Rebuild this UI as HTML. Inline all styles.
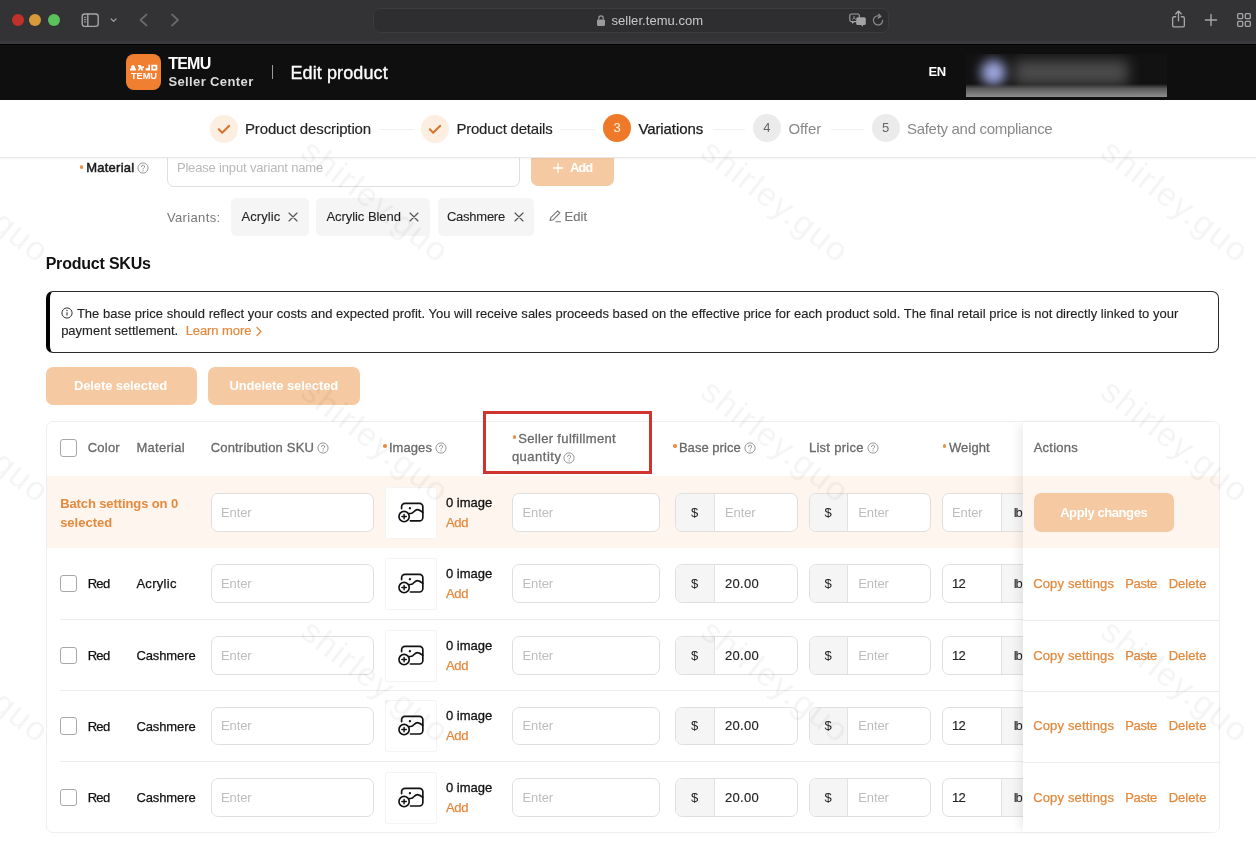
<!DOCTYPE html>
<html lang="en"><head><meta charset="utf-8"><title>Edit product - TEMU Seller Center</title>
<style>
*{box-sizing:border-box}
html,body{margin:0;padding:0}
body{will-change:transform;width:1256px;height:844px;overflow:hidden;background:#fff;position:relative;font-family:"Liberation Sans",sans-serif;font-size:13px}
.abs{position:absolute;display:block;z-index:5}
.abs svg,.hp{display:block}
.t{position:absolute;white-space:pre;line-height:20px;height:20px;z-index:5}
.chrome{position:absolute;left:0;top:0;width:1256px;height:44px;background:linear-gradient(#333335 0,#333335 40.500px,#3a3a3c 41.500px,#3a3a3c 100%)}
.tl{position:absolute;top:14.3px;width:12px;height:12px;border-radius:50%}
.url{position:absolute;left:373px;top:8px;width:516px;height:25px;border-radius:7px;background:#2e2e30;border:1px solid #3b3b3d}
.hdr{position:absolute;left:0;top:44px;width:1256px;height:56px;background:#0f0f0f;border-top:1px solid #020202}
.hdr .t,.hdr .abs{margin-top:-45px}
.logo{position:absolute;left:126px;top:8.800px;width:35.200px;height:36px;border-radius:8px;background:#f07f31;overflow:hidden}
.blur{position:absolute;left:966px;top:8.500px;width:200.500px;height:43px;overflow:hidden;background:#121212}
.blur .b1{position:absolute;left:15px;top:6px;width:25px;height:25px;border-radius:50%;background:#a0a9e2;filter:blur(6px)}
.blur .b2{position:absolute;left:48px;top:6px;width:114px;height:25px;background:#4c4c4c;filter:blur(7px)}
.blur .b3{position:absolute;left:0;bottom:0;width:100%;height:13px;background:linear-gradient(rgba(60,60,60,0),#5a5a5a 35%,#8e8e8e)}
.steps{position:absolute;left:0;top:100px;width:1256px;height:57.500px;background:#fff;border-bottom:1px solid #e6e6e6;box-shadow:0 1px 2px rgba(0,0,0,.04);z-index:20}
.steps .t,.steps .abs,.steps .ln,.steps .circ{margin-top:-100px}
.ln{position:absolute;top:128.500px;height:1px;background:#f0f0f0}
.circ{position:absolute;top:114.300px;width:28px;height:28px;border-radius:50%;text-align:center;line-height:28px;font-size:13px}
.wm{position:absolute;font-size:34px;line-height:44px;height:44px;color:rgba(0,0,0,.043);transform-origin:0 50%;transform:rotate(38deg);white-space:pre;z-index:40;letter-spacing:1.4px;pointer-events:none}
.st{position:absolute;width:3.500px;height:3.500px;border-radius:50%;background:#e8904a;z-index:5}
.inp{position:absolute;border:1px solid #dfdfdf;border-radius:7px;background:#fff;overflow:hidden;z-index:2}
.inp .pre{position:absolute;left:0;top:0;height:100%;background:#f5f5f5;border-right:1px solid #e2e2e2}
.inp .suf{position:absolute;top:0;right:0;height:100%;background:#f5f5f5;border-left:1px solid #e2e2e2}
.btn{position:absolute;border-radius:7px;background:#f5c9a1;z-index:5}
.chip{position:absolute;border-radius:5px;background:#f5f5f5;z-index:1}
.info{position:absolute;left:45.500px;top:291px;width:1173.500px;height:61.500px;border:1px solid #2a2a2a;border-left:4.500px solid #000;border-radius:7px;z-index:1}
.tbl{position:absolute;left:45.500px;top:420.500px;width:1174.500px;height:412px;border:1px solid #eeeeee;border-radius:7px;z-index:1}
.batch{position:absolute;left:46.500px;top:476.300px;width:1172.500px;height:71.700px;background:#fef5ee;z-index:1}
.cb{position:absolute;width:17.500px;height:17.500px;border:1px solid #a8a8a8;border-radius:3px;background:#fff;z-index:3}
.red{position:absolute;left:483.300px;top:411.300px;width:168.700px;height:62.500px;border:3px solid #cf352e;z-index:6}
.imgb{position:absolute;width:52px;height:52px;background:#fff;border-radius:3px;z-index:2;box-shadow:inset 0 0 0 1px #f4f4f4}
.imgb svg{position:absolute;left:13.500px;top:15px;display:block}
.sep{position:absolute;left:59.500px;width:963px;height:1px;background:#ececec;z-index:1}
.act{position:absolute;left:1022.500px;top:421.500px;width:196.500px;height:410px;background:#fff;z-index:4;box-shadow:-7px 0 10px -3px rgba(0,0,0,.075);border-radius:0 6px 6px 0;overflow:visible}
.actb{position:absolute;left:0;top:54.800px;width:100%;height:71.700px;background:#fef5ee}
.sep2{position:absolute;left:0;width:100%;height:1px;background:#ececec}

</style></head>
<body>
<div class="chrome">
<i class="tl" style="left:12.2px;background:#c0312a"></i><i class="tl" style="left:29.4px;background:#d69a3a"></i><i class="tl" style="left:47.6px;background:#5bc15c"></i>
<svg class="abs" style="left:80px;top:11px" width="40" height="18" viewBox="0 0 40 18" fill="none" stroke="#a6a6a8" stroke-width="1.4" stroke-linecap="round" stroke-linejoin="round"><rect x="2.2" y="3" width="16" height="12.4" rx="2.6"/><path d="M7.8 3v12.4"/><path d="M4.3 6.3h1.6M4.3 8.6h1.6M4.3 10.9h1.6" stroke-width="1"/><path d="M31.2 8l2.4 2.4L36 8" stroke="#9a9a9c" stroke-width="1.3"/></svg>
<svg class="abs" style="left:136px;top:12px" width="48" height="16" viewBox="0 0 48 16" fill="none" stroke="#6a6a6c" stroke-width="1.7" stroke-linecap="round" stroke-linejoin="round"><path d="M10.5 2.5L4.5 8l6 5.5"/><path d="M36 2.5l6 5.5-6 5.5"/></svg>
<div class="url"></div>
<svg class="abs" style="left:596px;top:14px" width="10" height="13" viewBox="0 0 10 13"><rect x="1" y="5.4" width="8" height="6.6" rx="1.2" fill="#9a9a9c"/><path d="M2.8 5.6V4a2.2 2.2 0 014.4 0v1.6" fill="none" stroke="#9a9a9c" stroke-width="1.2"/></svg>
<span class="t" style="left:611.40px;top:11.20px;font-size:13px;color:#c9c9cb;letter-spacing:0.054px;">seller.temu.com</span>
<svg class="abs" style="left:849px;top:13px" width="18" height="14" viewBox="0 0 18 14"><rect x="0.8" y="1" width="9.5" height="7.6" rx="1.6" fill="none" stroke="#a2a2a4" stroke-width="1.1"/><path d="M3 9v2l2.2-2z" fill="#a2a2a4"/><rect x="7.2" y="4.2" width="9.6" height="7.8" rx="1.6" fill="#a2a2a4"/><path d="M14 12v1.8L12 12z" fill="#a2a2a4"/><text x="3.2" y="7" font-size="5.5" font-family="Liberation Sans,sans-serif" fill="#a2a2a4">A</text></svg>
<svg class="abs" style="left:871px;top:13px" width="14" height="14" viewBox="0 0 14 14" fill="none" stroke="#8e8e90" stroke-width="1.2" stroke-linecap="round" stroke-linejoin="round"><path d="M11.6 7.4a4.6 4.6 0 11-2-3.8"/><path d="M7.6 1.2l2.2 2.3-2.6 1.6"/></svg>
<svg class="abs" style="left:1170.200px;top:8.800px" width="17" height="20.800" viewBox="0 0 18 22" fill="none" stroke="#a6a6a8" stroke-width="1.4" stroke-linecap="round" stroke-linejoin="round"><path d="M6 8.2H4.4a1.6 1.6 0 00-1.6 1.6v7.6A1.6 1.6 0 004.4 19h9.2a1.6 1.6 0 001.6-1.6V9.800a1.6 1.6 0 00-1.6-1.6H12"/><path d="M9 12.500V2.6M6 5.2l3-3 3 3"/></svg>
<svg class="abs" style="left:1202.600px;top:12px" width="16" height="16" viewBox="0 0 16 16" fill="none" stroke="#a6a6a8" stroke-width="1.4" stroke-linecap="round"><path d="M8 2.400v11.200M2.400 8h11.200"/></svg>
<svg class="abs" style="left:1235.800px;top:11.800px" width="16" height="16" viewBox="0 0 16 16" fill="none" stroke="#a6a6a8" stroke-width="1.3"><rect x="1.700" y="1.700" width="5" height="5" rx="1"/><rect x="9.3" y="1.700" width="5" height="5" rx="1"/><rect x="1.700" y="9.3" width="5" height="5" rx="1"/><rect x="9.3" y="9.3" width="5" height="5" rx="1"/></svg>
</div>
<div class="hdr">
<div class="logo"><svg width="35" height="36" viewBox="0 0 35 36"><g fill="#fff" transform="translate(-1.820,-1.550) scale(1.119,1.188)"><path d="M6.200 11.800l1.700-1.500 1.700 1.500v1.300l1 .9v1.200H5.200V14l1-.9z"/><path d="M12 10.600h2.600l1.200 1.500 1.900-.6v1.600l-1.500.5.900 1.600h-1.700l-.8-1.400-1.100 1.400H12l1.400-2.200z"/><path d="M19.200 13.200h2.400V10.400h1.500v4.800h-3.900z"/><path d="M24.200 10.400h5.400v4.800h-5.400zm1.600 1.500v1.800h2.200v-1.800z"/></g><text x="18" y="25.100" text-anchor="middle" font-family="Liberation Sans,sans-serif" font-weight="700" font-size="8.500" fill="#fff" textLength="26" lengthAdjust="spacingAndGlyphs">TEMU</text></svg></div>
<span class="t" style="left:168.15px;top:53.50px;font-size:16px;color:#fff;font-weight:700;letter-spacing:-0.759px;">TEMU</span>
<span class="t" style="left:168.40px;top:71.50px;font-size:13px;color:#dcdcdc;font-weight:700;letter-spacing:0.383px;">Seller Center</span>
<div class="abs" style="left:271.5px;top:65px;width:1.5px;height:14px;background:#9a9a9a"></div>
<span class="t" style="left:290.40px;top:62.50px;font-size:18px;color:#fff;letter-spacing:0.112px;-webkit-text-stroke:0.35px #fff;">Edit product</span>
<span class="t" style="left:928.40px;top:61.50px;font-size:13px;color:#fff;font-weight:700;letter-spacing:-0.262px;">EN</span>
<div class="blur"><b class="b1"></b><b class="b2"></b><b class="b3"></b></div>
</div>
<div class="steps">
<div class="abs" style="left:209.7px;top:115px"><svg width="28" height="28" viewBox="0 0 28 28"><circle cx="14" cy="14" r="14" fill="#fdeee2"/><path d="M8.800 14.200l3.400 3.500 7-7" fill="none" stroke="#d8742f" stroke-width="2" stroke-linecap="round" stroke-linejoin="round"/></svg></div>
<span class="t" style="left:244.90px;top:119.20px;font-size:15px;color:#222;letter-spacing:-0.117px;-webkit-text-stroke:0.15px #222;">Product description</span>
<i class="ln" style="left:379px;width:35px"></i>
<div class="abs" style="left:420.500px;top:115px"><svg width="28" height="28" viewBox="0 0 28 28"><circle cx="14" cy="14" r="14" fill="#fdeee2"/><path d="M8.800 14.200l3.400 3.500 7-7" fill="none" stroke="#d8742f" stroke-width="2" stroke-linecap="round" stroke-linejoin="round"/></svg></div>
<span class="t" style="left:456.40px;top:119.20px;font-size:15px;color:#222;letter-spacing:-0.210px;-webkit-text-stroke:0.15px #222;">Product details</span>
<i class="ln" style="left:560px;width:35px"></i>
<div class="circ" style="left:603.2px;background:#ee7a29;color:#fff3e4">3</div>
<span class="t" style="left:638.40px;top:118.50px;font-size:15px;color:#1a1a1a;letter-spacing:-0.088px;-webkit-text-stroke:0.25px #1a1a1a;">Variations</span>
<i class="ln" style="left:712.500px;width:32px"></i>
<div class="circ" style="left:752.900px;background:#ebebeb;color:#666">4</div>
<span class="t" style="left:788.40px;top:118.50px;font-size:15px;color:#8a8a8a;letter-spacing:-0.070px;">Offer</span>
<i class="ln" style="left:830.500px;width:33px"></i>
<div class="circ" style="left:871.700px;background:#ebebeb;color:#666">5</div>
<span class="t" style="left:907.00px;top:118.50px;font-size:15px;color:#8a8a8a;letter-spacing:-0.303px;">Safety and compliance</span>
</div>
<span class="wm" style="left:-94px;top:123.5px">shirley.guo</span>
<span class="wm" style="left:306px;top:123.5px">shirley.guo</span>
<span class="wm" style="left:706px;top:123.5px">shirley.guo</span>
<span class="wm" style="left:1106px;top:123.5px">shirley.guo</span>
<span class="wm" style="left:-94px;top:363.5px">shirley.guo</span>
<span class="wm" style="left:306px;top:363.5px">shirley.guo</span>
<span class="wm" style="left:706px;top:363.5px">shirley.guo</span>
<span class="wm" style="left:1106px;top:363.5px">shirley.guo</span>
<span class="wm" style="left:-94px;top:603.5px">shirley.guo</span>
<span class="wm" style="left:306px;top:603.5px">shirley.guo</span>
<span class="wm" style="left:706px;top:603.5px">shirley.guo</span>
<span class="wm" style="left:1106px;top:603.5px">shirley.guo</span>
<i class="st" style="left:79.5px;top:165.0px"></i>
<span class="t" style="left:86.15px;top:157.50px;font-size:13px;color:#1a1a1a;letter-spacing:0.257px;-webkit-text-stroke:0.5px #1a1a1a;">Material</span>
<span class="abs" style="left:136.5px;top:161.5px;width:12px;height:12px"><svg class="hp" width="12" height="12" viewBox="0 0 12 12"><circle cx="6" cy="6" r="5.1" fill="none" stroke="#8c8c8c" stroke-width="0.9"/><path d="M4.500 4.700a1.550 1.550 0 113 .55c-.2.600-1 .8-1.400 1.500v.4" fill="none" stroke="#8c8c8c" stroke-width="0.9" stroke-linecap="round"/><circle cx="6.050" cy="8.800" r=".6" fill="#8c8c8c"/></svg></span>
<div class="inp" style="left:166.5px;top:148.5px;width:353px;height:38px"></div>
<span class="t" style="left:176.90px;top:157.50px;font-size:13px;color:#b9b9b9;letter-spacing:-0.167px;">Please input variant name</span>
<div class="btn" style="left:530.500px;top:148px;width:83px;height:38px"></div>
<svg class="abs" style="left:552px;top:162px" width="12" height="12" viewBox="0 0 12 12"><path d="M6 1v10M1 6h10" stroke="#fff" stroke-width="1.3" fill="none"/></svg>
<span class="t" style="left:569.90px;top:157.50px;font-size:13px;color:#fff;font-weight:700;letter-spacing:-0.991px;">Add</span>
<span class="t" style="left:166.90px;top:207.75px;font-size:13px;color:#777;letter-spacing:0.370px;">Variants:</span>
<div class="chip" style="left:231px;top:197.5px;width:77.75px;height:38px"></div>
<span class="t" style="left:241.40px;top:206.50px;font-size:13px;color:#222;letter-spacing:0.086px;-webkit-text-stroke:0.1px #222;">Acrylic</span>
<span class="abs" style="left:288px;top:211.5px;width:10px;height:10px"><svg width="10" height="10" viewBox="0 0 10 10"><path d="M1 1l8 8M9 1L1 9" stroke="#555" stroke-width="1.15" fill="none" stroke-linecap="round"/></svg></span>
<div class="chip" style="left:316.25px;top:197.5px;width:113.75px;height:38px"></div>
<span class="t" style="left:326.40px;top:206.50px;font-size:13px;color:#222;letter-spacing:-0.049px;-webkit-text-stroke:0.1px #222;">Acrylic Blend</span>
<span class="abs" style="left:409px;top:211.5px;width:10px;height:10px"><svg width="10" height="10" viewBox="0 0 10 10"><path d="M1 1l8 8M9 1L1 9" stroke="#555" stroke-width="1.15" fill="none" stroke-linecap="round"/></svg></span>
<div class="chip" style="left:437.5px;top:197.5px;width:96.75px;height:38px"></div>
<span class="t" style="left:446.90px;top:206.50px;font-size:13px;color:#222;letter-spacing:-0.238px;-webkit-text-stroke:0.1px #222;">Cashmere</span>
<span class="abs" style="left:513.5px;top:211.5px;width:10px;height:10px"><svg width="10" height="10" viewBox="0 0 10 10"><path d="M1 1l8 8M9 1L1 9" stroke="#555" stroke-width="1.15" fill="none" stroke-linecap="round"/></svg></span>
<svg class="abs" style="left:548px;top:209px" width="14" height="15" viewBox="0 0 14 15" fill="none" stroke="#777" stroke-width="1.1" stroke-linecap="round" stroke-linejoin="round"><path d="M9.600 1.800l2.200 2.200-6.800 6.800-2.900.7.700-2.900z"/><path d="M8 12.800h4.500"/></svg>
<span class="t" style="left:564.40px;top:207.00px;font-size:13px;color:#777;letter-spacing:0.131px;-webkit-text-stroke:0.2px #777;">Edit</span>
<span class="t" style="left:45.65px;top:254.00px;font-size:16px;color:#111;font-weight:700;letter-spacing:-0.207px;">Product SKUs</span>
<div class="info"></div>
<svg class="abs" style="left:61px;top:307.2px" width="12" height="12" viewBox="0 0 12 12"><circle cx="6" cy="6" r="5.1" fill="none" stroke="#333" stroke-width="1"/><path d="M6 5.300v3.300" stroke="#333" stroke-width="1.1"/><circle cx="6" cy="3.500" r=".7" fill="#333"/></svg>
<span class="t" style="left:76.90px;top:303.50px;font-size:13px;color:#222;letter-spacing:0.010px;-webkit-text-stroke:0.12px #222;">The base price should reflect your costs and expected profit. You will receive sales proceeds based on the effective price for each product sold. The final retail price is not directly linked to your</span>
<span class="t" style="left:61.15px;top:320.70px;font-size:13px;color:#222;-webkit-text-stroke:0.12px #222;">payment settlement.</span>
<span class="t" style="left:185.65px;top:320.70px;font-size:13px;color:#e38a3e;letter-spacing:-0.076px;-webkit-text-stroke:0.2px #e38a3e;">Learn more</span>
<svg class="abs" style="left:254.500px;top:325.500px" width="8" height="11" viewBox="0 0 8 11"><path d="M2 1.500l4 4-4 4" fill="none" stroke="#e38a3e" stroke-width="1.3" stroke-linecap="round" stroke-linejoin="round"/></svg>
<div class="btn" style="left:45.500px;top:367px;width:151.500px;height:38px"></div>
<span class="t" style="left:73.90px;top:376.00px;font-size:13px;color:#fff;font-weight:700;letter-spacing:-0.098px;">Delete selected</span>
<div class="btn" style="left:208px;top:367px;width:152px;height:38px"></div>
<span class="t" style="left:229.40px;top:376.00px;font-size:13px;color:#fff;font-weight:700;letter-spacing:-0.109px;">Undelete selected</span>
<div class="tbl"></div>
<div class="batch"></div>
<i class="cb" style="left:59.500px;top:439.300px"></i>
<span class="t" style="left:87.65px;top:438.00px;font-size:13px;color:#696969;letter-spacing:0.243px;-webkit-text-stroke:0.3px #696969;">Color</span>
<span class="t" style="left:136.40px;top:438.00px;font-size:13px;color:#696969;letter-spacing:0.293px;-webkit-text-stroke:0.3px #696969;">Material</span>
<span class="t" style="left:210.65px;top:438.00px;font-size:13px;color:#696969;letter-spacing:0.190px;-webkit-text-stroke:0.3px #696969;">Contribution SKU</span>
<span class="abs" style="left:317px;top:442px;width:12px;height:12px"><svg class="hp" width="12" height="12" viewBox="0 0 12 12"><circle cx="6" cy="6" r="5.1" fill="none" stroke="#8c8c8c" stroke-width="0.9"/><path d="M4.500 4.700a1.550 1.550 0 113 .55c-.2.600-1 .8-1.400 1.500v.4" fill="none" stroke="#8c8c8c" stroke-width="0.9" stroke-linecap="round"/><circle cx="6.050" cy="8.800" r=".6" fill="#8c8c8c"/></svg></span>
<i class="st" style="left:383.25px;top:444.0px"></i>
<span class="t" style="left:388.90px;top:438.00px;font-size:13px;color:#696969;letter-spacing:0.082px;-webkit-text-stroke:0.3px #696969;">Images</span>
<span class="abs" style="left:434.5px;top:442px;width:12px;height:12px"><svg class="hp" width="12" height="12" viewBox="0 0 12 12"><circle cx="6" cy="6" r="5.1" fill="none" stroke="#8c8c8c" stroke-width="0.9"/><path d="M4.500 4.700a1.550 1.550 0 113 .55c-.2.600-1 .8-1.400 1.500v.4" fill="none" stroke="#8c8c8c" stroke-width="0.9" stroke-linecap="round"/><circle cx="6.050" cy="8.800" r=".6" fill="#8c8c8c"/></svg></span>
<i class="st" style="left:512.5px;top:435.0px"></i>
<span class="t" style="left:518.15px;top:429.00px;font-size:13px;color:#696969;letter-spacing:0.340px;-webkit-text-stroke:0.3px #696969;">Seller fulfillment</span>
<span class="t" style="left:511.90px;top:446.75px;font-size:13px;color:#696969;letter-spacing:0.500px;-webkit-text-stroke:0.3px #696969;">quantity</span>
<span class="abs" style="left:563.25px;top:451.5px;width:12px;height:12px"><svg class="hp" width="12" height="12" viewBox="0 0 12 12"><circle cx="6" cy="6" r="5.1" fill="none" stroke="#8c8c8c" stroke-width="0.9"/><path d="M4.500 4.700a1.550 1.550 0 113 .55c-.2.600-1 .8-1.400 1.500v.4" fill="none" stroke="#8c8c8c" stroke-width="0.9" stroke-linecap="round"/><circle cx="6.050" cy="8.800" r=".6" fill="#8c8c8c"/></svg></span>
<div class="red"></div>
<i class="st" style="left:673.0px;top:444.0px"></i>
<span class="t" style="left:678.90px;top:438.00px;font-size:13px;color:#696969;letter-spacing:0.042px;-webkit-text-stroke:0.3px #696969;">Base price</span>
<span class="abs" style="left:743.5px;top:442px;width:12px;height:12px"><svg class="hp" width="12" height="12" viewBox="0 0 12 12"><circle cx="6" cy="6" r="5.1" fill="none" stroke="#8c8c8c" stroke-width="0.9"/><path d="M4.500 4.700a1.550 1.550 0 113 .55c-.2.600-1 .8-1.400 1.500v.4" fill="none" stroke="#8c8c8c" stroke-width="0.9" stroke-linecap="round"/><circle cx="6.050" cy="8.800" r=".6" fill="#8c8c8c"/></svg></span>
<span class="t" style="left:808.90px;top:438.00px;font-size:13px;color:#696969;letter-spacing:0.280px;-webkit-text-stroke:0.3px #696969;">List price</span>
<span class="abs" style="left:867.25px;top:442px;width:12px;height:12px"><svg class="hp" width="12" height="12" viewBox="0 0 12 12"><circle cx="6" cy="6" r="5.1" fill="none" stroke="#8c8c8c" stroke-width="0.9"/><path d="M4.500 4.700a1.550 1.550 0 113 .55c-.2.600-1 .8-1.400 1.500v.4" fill="none" stroke="#8c8c8c" stroke-width="0.9" stroke-linecap="round"/><circle cx="6.050" cy="8.800" r=".6" fill="#8c8c8c"/></svg></span>
<i class="st" style="left:942.75px;top:444.0px"></i>
<span class="t" style="left:948.90px;top:438.00px;font-size:13px;color:#696969;letter-spacing:0.113px;-webkit-text-stroke:0.3px #696969;">Weight</span>
<span class="t" style="left:60.15px;top:493.50px;font-size:13px;color:#e38a3e;font-weight:700;letter-spacing:-0.104px;">Batch settings on 0</span>
<span class="t" style="left:60.15px;top:512.80px;font-size:13px;color:#e38a3e;font-weight:700;">selected</span>
<div class="inp" style="left:210.500px;top:493.2px;width:163.500px;height:38.600px"></div>
<span class="t" style="left:220.90px;top:502.80px;font-size:13px;color:#bdbdbd;letter-spacing:-0.070px;">Enter</span>
<div class="imgb" style="left:384.500px;top:486.75px"><svg width="28" height="22" viewBox="0 0 28 22" fill="none" stroke="#111" stroke-width="1.650" stroke-linecap="round" stroke-linejoin="round"><path d="M3.600 6.700V4.820a3.400 3.400 0 013.400-3.400h14.450a3.400 3.400 0 013.400 3.400v10.730a3.400 3.400 0 01-3.400 3.400H12.400"/><path d="M11.400 11.500h1.400c1.500 0 2.300-.900 3.300-2 .900-.950 1.900-1.850 3.300-1.850 1.900 0 3.600 1.200 5.400 2.800"/><circle cx="6.100" cy="14.550" r="5.150"/><path d="M6.100 12.350v4.400M3.900 14.550h4.400" stroke-width="1.450"/><circle cx="11.900" cy="6.250" r="1.150" fill="#111" stroke="none"/></svg></div>
<span class="t" style="left:445.90px;top:492.80px;font-size:13px;color:#111;letter-spacing:0.008px;-webkit-text-stroke:0.3px #111;">0 image</span>
<span class="t" style="left:445.90px;top:512.80px;font-size:13px;color:#e38a3e;letter-spacing:-0.220px;-webkit-text-stroke:0.25px #e38a3e;">Add</span>
<div class="inp" style="left:512px;top:493.2px;width:147.500px;height:38.600px"></div>
<span class="t" style="left:522.40px;top:502.80px;font-size:13px;color:#bdbdbd;letter-spacing:-0.070px;">Enter</span>
<div class="inp" style="left:675px;top:493.2px;width:122.500px;height:38.600px"><b class="pre" style="width:38.500px"></b></div>
<span class="t" style="left:690.90px;top:502.80px;font-size:13px;color:#222;">$</span>
<span class="t" style="left:724.90px;top:502.80px;font-size:13px;color:#bdbdbd;letter-spacing:-0.070px;">Enter</span>
<div class="inp" style="left:808.800px;top:493.2px;width:122.500px;height:38.600px"><b class="pre" style="width:38.500px"></b></div>
<span class="t" style="left:824.60px;top:502.80px;font-size:13px;color:#222;">$</span>
<span class="t" style="left:858.15px;top:502.80px;font-size:13px;color:#bdbdbd;letter-spacing:-0.070px;">Enter</span>
<div class="inp" style="left:942.300px;top:493.2px;width:100px;height:38.600px"><b class="suf" style="left:57.500px"></b></div>
<span class="t" style="left:951.90px;top:502.80px;font-size:13px;color:#bdbdbd;letter-spacing:-0.070px;">Enter</span>
<span class="t" style="left:1013.65px;top:502.80px;font-size:13px;color:#222;letter-spacing:-1.000px;z-index:3;">lb</span>
<i class="cb" style="left:59.500px;top:574.9px"></i>
<span class="t" style="left:87.65px;top:574.10px;font-size:13px;color:#111;letter-spacing:-0.655px;-webkit-text-stroke:0.25px #111;">Red</span>
<span class="t" style="left:136.40px;top:574.10px;font-size:13px;color:#111;letter-spacing:0.295px;-webkit-text-stroke:0.25px #111;">Acrylic</span>
<div class="inp" style="left:210.500px;top:564.3000000000001px;width:163.500px;height:38.600px"></div>
<span class="t" style="left:220.90px;top:573.90px;font-size:13px;color:#bdbdbd;letter-spacing:-0.070px;">Enter</span>
<div class="imgb" style="left:384.500px;top:557.85px"><svg width="28" height="22" viewBox="0 0 28 22" fill="none" stroke="#111" stroke-width="1.650" stroke-linecap="round" stroke-linejoin="round"><path d="M3.600 6.700V4.820a3.400 3.400 0 013.400-3.400h14.450a3.400 3.400 0 013.400 3.400v10.730a3.400 3.400 0 01-3.400 3.400H12.400"/><path d="M11.400 11.500h1.400c1.500 0 2.300-.900 3.300-2 .900-.950 1.900-1.850 3.300-1.850 1.900 0 3.600 1.200 5.400 2.800"/><circle cx="6.100" cy="14.550" r="5.150"/><path d="M6.100 12.350v4.400M3.900 14.550h4.400" stroke-width="1.450"/><circle cx="11.900" cy="6.250" r="1.150" fill="#111" stroke="none"/></svg></div>
<span class="t" style="left:445.90px;top:563.90px;font-size:13px;color:#111;letter-spacing:0.008px;-webkit-text-stroke:0.3px #111;">0 image</span>
<span class="t" style="left:445.90px;top:583.90px;font-size:13px;color:#e38a3e;letter-spacing:-0.220px;-webkit-text-stroke:0.25px #e38a3e;">Add</span>
<div class="inp" style="left:512px;top:564.3000000000001px;width:147.500px;height:38.600px"></div>
<span class="t" style="left:522.40px;top:573.90px;font-size:13px;color:#bdbdbd;letter-spacing:-0.070px;">Enter</span>
<div class="inp" style="left:675px;top:564.3000000000001px;width:122.500px;height:38.600px"><b class="pre" style="width:38.500px"></b></div>
<span class="t" style="left:690.90px;top:573.90px;font-size:13px;color:#222;">$</span>
<span class="t" style="left:724.90px;top:573.90px;font-size:13px;color:#222;letter-spacing:0.313px;-webkit-text-stroke:0.15px #222;">20.00</span>
<div class="inp" style="left:808.800px;top:564.3000000000001px;width:122.500px;height:38.600px"><b class="pre" style="width:38.500px"></b></div>
<span class="t" style="left:824.60px;top:573.90px;font-size:13px;color:#222;">$</span>
<span class="t" style="left:858.15px;top:573.90px;font-size:13px;color:#bdbdbd;letter-spacing:-0.070px;">Enter</span>
<div class="inp" style="left:942.300px;top:564.3000000000001px;width:100px;height:38.600px"><b class="suf" style="left:57.500px"></b></div>
<span class="t" style="left:951.90px;top:573.90px;font-size:13px;color:#222;letter-spacing:-0.669px;-webkit-text-stroke:0.15px #222;">12</span>
<span class="t" style="left:1013.65px;top:573.90px;font-size:13px;color:#222;letter-spacing:-1.000px;z-index:3;">lb</span>
<i class="cb" style="left:59.500px;top:646.6999999999999px"></i>
<span class="t" style="left:87.65px;top:645.90px;font-size:13px;color:#111;letter-spacing:-0.655px;-webkit-text-stroke:0.25px #111;">Red</span>
<span class="t" style="left:136.40px;top:645.90px;font-size:13px;color:#111;letter-spacing:-0.096px;-webkit-text-stroke:0.25px #111;">Cashmere</span>
<div class="inp" style="left:210.500px;top:636.1px;width:163.500px;height:38.600px"></div>
<span class="t" style="left:220.90px;top:645.70px;font-size:13px;color:#bdbdbd;letter-spacing:-0.070px;">Enter</span>
<div class="imgb" style="left:384.500px;top:629.65px"><svg width="28" height="22" viewBox="0 0 28 22" fill="none" stroke="#111" stroke-width="1.650" stroke-linecap="round" stroke-linejoin="round"><path d="M3.600 6.700V4.820a3.400 3.400 0 013.400-3.400h14.450a3.400 3.400 0 013.400 3.400v10.730a3.400 3.400 0 01-3.400 3.400H12.400"/><path d="M11.400 11.500h1.400c1.500 0 2.300-.900 3.300-2 .900-.950 1.900-1.850 3.300-1.850 1.900 0 3.600 1.200 5.400 2.800"/><circle cx="6.100" cy="14.550" r="5.150"/><path d="M6.100 12.350v4.400M3.900 14.550h4.400" stroke-width="1.450"/><circle cx="11.900" cy="6.250" r="1.150" fill="#111" stroke="none"/></svg></div>
<span class="t" style="left:445.90px;top:635.70px;font-size:13px;color:#111;letter-spacing:0.008px;-webkit-text-stroke:0.3px #111;">0 image</span>
<span class="t" style="left:445.90px;top:655.70px;font-size:13px;color:#e38a3e;letter-spacing:-0.220px;-webkit-text-stroke:0.25px #e38a3e;">Add</span>
<div class="inp" style="left:512px;top:636.1px;width:147.500px;height:38.600px"></div>
<span class="t" style="left:522.40px;top:645.70px;font-size:13px;color:#bdbdbd;letter-spacing:-0.070px;">Enter</span>
<div class="inp" style="left:675px;top:636.1px;width:122.500px;height:38.600px"><b class="pre" style="width:38.500px"></b></div>
<span class="t" style="left:690.90px;top:645.70px;font-size:13px;color:#222;">$</span>
<span class="t" style="left:724.90px;top:645.70px;font-size:13px;color:#222;letter-spacing:0.313px;-webkit-text-stroke:0.15px #222;">20.00</span>
<div class="inp" style="left:808.800px;top:636.1px;width:122.500px;height:38.600px"><b class="pre" style="width:38.500px"></b></div>
<span class="t" style="left:824.60px;top:645.70px;font-size:13px;color:#222;">$</span>
<span class="t" style="left:858.15px;top:645.70px;font-size:13px;color:#bdbdbd;letter-spacing:-0.070px;">Enter</span>
<div class="inp" style="left:942.300px;top:636.1px;width:100px;height:38.600px"><b class="suf" style="left:57.500px"></b></div>
<span class="t" style="left:951.90px;top:645.70px;font-size:13px;color:#222;letter-spacing:-0.669px;-webkit-text-stroke:0.15px #222;">12</span>
<span class="t" style="left:1013.65px;top:645.70px;font-size:13px;color:#222;letter-spacing:-1.000px;z-index:3;">lb</span>
<i class="cb" style="left:59.500px;top:717.3px"></i>
<span class="t" style="left:87.65px;top:716.50px;font-size:13px;color:#111;letter-spacing:-0.655px;-webkit-text-stroke:0.25px #111;">Red</span>
<span class="t" style="left:136.40px;top:716.50px;font-size:13px;color:#111;letter-spacing:-0.096px;-webkit-text-stroke:0.25px #111;">Cashmere</span>
<div class="inp" style="left:210.500px;top:706.7px;width:163.500px;height:38.600px"></div>
<span class="t" style="left:220.90px;top:716.30px;font-size:13px;color:#bdbdbd;letter-spacing:-0.070px;">Enter</span>
<div class="imgb" style="left:384.500px;top:700.25px"><svg width="28" height="22" viewBox="0 0 28 22" fill="none" stroke="#111" stroke-width="1.650" stroke-linecap="round" stroke-linejoin="round"><path d="M3.600 6.700V4.820a3.400 3.400 0 013.400-3.400h14.450a3.400 3.400 0 013.400 3.400v10.730a3.400 3.400 0 01-3.400 3.400H12.400"/><path d="M11.400 11.500h1.400c1.500 0 2.300-.900 3.300-2 .900-.950 1.900-1.850 3.300-1.850 1.900 0 3.600 1.200 5.400 2.800"/><circle cx="6.100" cy="14.550" r="5.150"/><path d="M6.100 12.350v4.400M3.900 14.550h4.400" stroke-width="1.450"/><circle cx="11.900" cy="6.250" r="1.150" fill="#111" stroke="none"/></svg></div>
<span class="t" style="left:445.90px;top:706.30px;font-size:13px;color:#111;letter-spacing:0.008px;-webkit-text-stroke:0.3px #111;">0 image</span>
<span class="t" style="left:445.90px;top:726.30px;font-size:13px;color:#e38a3e;letter-spacing:-0.220px;-webkit-text-stroke:0.25px #e38a3e;">Add</span>
<div class="inp" style="left:512px;top:706.7px;width:147.500px;height:38.600px"></div>
<span class="t" style="left:522.40px;top:716.30px;font-size:13px;color:#bdbdbd;letter-spacing:-0.070px;">Enter</span>
<div class="inp" style="left:675px;top:706.7px;width:122.500px;height:38.600px"><b class="pre" style="width:38.500px"></b></div>
<span class="t" style="left:690.90px;top:716.30px;font-size:13px;color:#222;">$</span>
<span class="t" style="left:724.90px;top:716.30px;font-size:13px;color:#222;letter-spacing:0.313px;-webkit-text-stroke:0.15px #222;">20.00</span>
<div class="inp" style="left:808.800px;top:706.7px;width:122.500px;height:38.600px"><b class="pre" style="width:38.500px"></b></div>
<span class="t" style="left:824.60px;top:716.30px;font-size:13px;color:#222;">$</span>
<span class="t" style="left:858.15px;top:716.30px;font-size:13px;color:#bdbdbd;letter-spacing:-0.070px;">Enter</span>
<div class="inp" style="left:942.300px;top:706.7px;width:100px;height:38.600px"><b class="suf" style="left:57.500px"></b></div>
<span class="t" style="left:951.90px;top:716.30px;font-size:13px;color:#222;letter-spacing:-0.669px;-webkit-text-stroke:0.15px #222;">12</span>
<span class="t" style="left:1013.65px;top:716.30px;font-size:13px;color:#222;letter-spacing:-1.000px;z-index:3;">lb</span>
<i class="cb" style="left:59.500px;top:788.8px"></i>
<span class="t" style="left:87.65px;top:788.00px;font-size:13px;color:#111;letter-spacing:-0.655px;-webkit-text-stroke:0.25px #111;">Red</span>
<span class="t" style="left:136.40px;top:788.00px;font-size:13px;color:#111;letter-spacing:-0.096px;-webkit-text-stroke:0.25px #111;">Cashmere</span>
<div class="inp" style="left:210.500px;top:778.2px;width:163.500px;height:38.600px"></div>
<span class="t" style="left:220.90px;top:787.80px;font-size:13px;color:#bdbdbd;letter-spacing:-0.070px;">Enter</span>
<div class="imgb" style="left:384.500px;top:771.75px"><svg width="28" height="22" viewBox="0 0 28 22" fill="none" stroke="#111" stroke-width="1.650" stroke-linecap="round" stroke-linejoin="round"><path d="M3.600 6.700V4.820a3.400 3.400 0 013.400-3.400h14.450a3.400 3.400 0 013.400 3.400v10.730a3.400 3.400 0 01-3.400 3.400H12.400"/><path d="M11.400 11.500h1.400c1.500 0 2.300-.900 3.300-2 .900-.950 1.900-1.850 3.300-1.850 1.900 0 3.600 1.200 5.400 2.800"/><circle cx="6.100" cy="14.550" r="5.150"/><path d="M6.100 12.350v4.400M3.900 14.550h4.400" stroke-width="1.450"/><circle cx="11.900" cy="6.250" r="1.150" fill="#111" stroke="none"/></svg></div>
<span class="t" style="left:445.90px;top:777.80px;font-size:13px;color:#111;letter-spacing:0.008px;-webkit-text-stroke:0.3px #111;">0 image</span>
<span class="t" style="left:445.90px;top:797.80px;font-size:13px;color:#e38a3e;letter-spacing:-0.220px;-webkit-text-stroke:0.25px #e38a3e;">Add</span>
<div class="inp" style="left:512px;top:778.2px;width:147.500px;height:38.600px"></div>
<span class="t" style="left:522.40px;top:787.80px;font-size:13px;color:#bdbdbd;letter-spacing:-0.070px;">Enter</span>
<div class="inp" style="left:675px;top:778.2px;width:122.500px;height:38.600px"><b class="pre" style="width:38.500px"></b></div>
<span class="t" style="left:690.90px;top:787.80px;font-size:13px;color:#222;">$</span>
<span class="t" style="left:724.90px;top:787.80px;font-size:13px;color:#222;letter-spacing:0.313px;-webkit-text-stroke:0.15px #222;">20.00</span>
<div class="inp" style="left:808.800px;top:778.2px;width:122.500px;height:38.600px"><b class="pre" style="width:38.500px"></b></div>
<span class="t" style="left:824.60px;top:787.80px;font-size:13px;color:#222;">$</span>
<span class="t" style="left:858.15px;top:787.80px;font-size:13px;color:#bdbdbd;letter-spacing:-0.070px;">Enter</span>
<div class="inp" style="left:942.300px;top:778.2px;width:100px;height:38.600px"><b class="suf" style="left:57.500px"></b></div>
<span class="t" style="left:951.90px;top:787.80px;font-size:13px;color:#222;letter-spacing:-0.669px;-webkit-text-stroke:0.15px #222;">12</span>
<span class="t" style="left:1013.65px;top:787.80px;font-size:13px;color:#222;letter-spacing:-1.000px;z-index:3;">lb</span>
<i class="sep" style="top:619.1px"></i>
<i class="sep" style="top:690.0px"></i>
<i class="sep" style="top:760.9px"></i>
<div class="act"><div class="actb"></div>
<i class="sep2" style="top:198.60000000000002px"></i>
<i class="sep2" style="top:269.5px"></i>
<i class="sep2" style="top:340.4px"></i>
</div>
<span class="t" style="left:1033.65px;top:438.00px;font-size:13px;color:#696969;letter-spacing:0.235px;-webkit-text-stroke:0.3px #696969;">Actions</span>
<div class="btn" style="left:1033.700px;top:493.200px;width:140.500px;height:38.500px"></div>
<span class="t" style="left:1060.15px;top:502.50px;font-size:13px;color:#fff;font-weight:700;letter-spacing:-0.410px;">Apply changes</span>
<span class="t" style="left:1033.15px;top:574.00px;font-size:13px;color:#e38a3e;letter-spacing:0.170px;-webkit-text-stroke:0.25px #e38a3e;">Copy settings</span>
<span class="t" style="left:1125.15px;top:574.00px;font-size:13px;color:#e38a3e;letter-spacing:-0.300px;-webkit-text-stroke:0.25px #e38a3e;">Paste</span>
<span class="t" style="left:1168.65px;top:574.00px;font-size:13px;color:#e38a3e;letter-spacing:0.044px;-webkit-text-stroke:0.25px #e38a3e;">Delete</span>
<span class="t" style="left:1033.15px;top:645.80px;font-size:13px;color:#e38a3e;letter-spacing:0.170px;-webkit-text-stroke:0.25px #e38a3e;">Copy settings</span>
<span class="t" style="left:1125.15px;top:645.80px;font-size:13px;color:#e38a3e;letter-spacing:-0.300px;-webkit-text-stroke:0.25px #e38a3e;">Paste</span>
<span class="t" style="left:1168.65px;top:645.80px;font-size:13px;color:#e38a3e;letter-spacing:0.044px;-webkit-text-stroke:0.25px #e38a3e;">Delete</span>
<span class="t" style="left:1033.15px;top:716.40px;font-size:13px;color:#e38a3e;letter-spacing:0.170px;-webkit-text-stroke:0.25px #e38a3e;">Copy settings</span>
<span class="t" style="left:1125.15px;top:716.40px;font-size:13px;color:#e38a3e;letter-spacing:-0.300px;-webkit-text-stroke:0.25px #e38a3e;">Paste</span>
<span class="t" style="left:1168.65px;top:716.40px;font-size:13px;color:#e38a3e;letter-spacing:0.044px;-webkit-text-stroke:0.25px #e38a3e;">Delete</span>
<span class="t" style="left:1033.15px;top:787.90px;font-size:13px;color:#e38a3e;letter-spacing:0.170px;-webkit-text-stroke:0.25px #e38a3e;">Copy settings</span>
<span class="t" style="left:1125.15px;top:787.90px;font-size:13px;color:#e38a3e;letter-spacing:-0.300px;-webkit-text-stroke:0.25px #e38a3e;">Paste</span>
<span class="t" style="left:1168.65px;top:787.90px;font-size:13px;color:#e38a3e;letter-spacing:0.044px;-webkit-text-stroke:0.25px #e38a3e;">Delete</span>
</body></html>
